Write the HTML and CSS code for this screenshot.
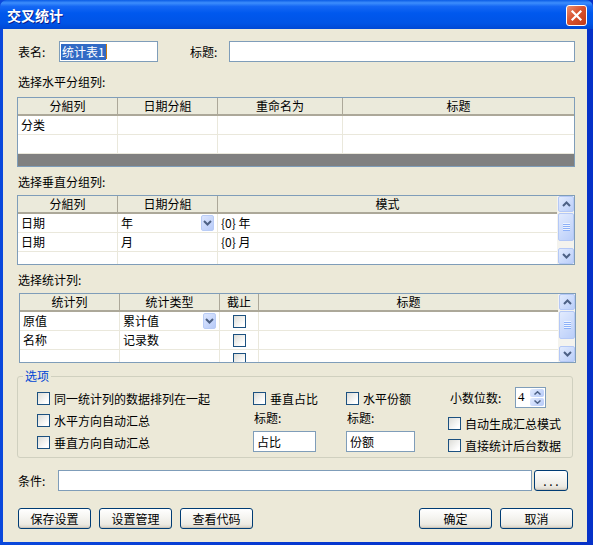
FILE: index.html
```html
<!DOCTYPE html>
<html lang="zh-CN">
<head>
    <meta charset="UTF-8">
    <title>交叉统计</title>
    <link rel="stylesheet" href="styles.css">
</head>
<body>
<div class="window">
    <div class="titlebar">
        <span class="title">交叉统计</span>
        <button class="close-btn" aria-label="关闭">
            <svg width="13" height="13" viewBox="0 0 13 13"><path d="M2.5 2.5 L10.5 10.5 M10.5 2.5 L2.5 10.5" stroke="#fff" stroke-width="2.2" stroke-linecap="square"/></svg>
        </button>
    </div>

    <div class="client">
        <div class="name-row">
            <label class="lbl lbl-name">表名:</label>
            <div class="textbox tb-name"><span class="sel">统计表1</span><span class="caret"></span></div>
            <label class="lbl lbl-title">标题:</label>
            <div class="textbox tb-title"></div>
        </div>

        <!-- horizontal group -->
        <div class="section-label">选择水平分组列:</div>
        <div class="grid">
            <div class="grid-body">
                <table>
                    <colgroup><col style="width:100px"><col style="width:100px"><col style="width:125px"><col></colgroup>
                    <tr><th>分組列</th><th>日期分組</th><th>重命名为</th><th class="last">标题</th></tr>
                    <tr><td>分类</td><td></td><td></td><td class="last"></td></tr>
                    <tr><td></td><td></td><td></td><td class="last"></td></tr>
                </table>
                <div class="grid-fill"></div>
            </div>
        </div>

        <!-- vertical group -->
        <div class="section-label section-label-2">选择垂直分组列:</div>
        <div class="grid grid-scroll">
            <div class="grid-body">
                <table>
                    <colgroup><col style="width:100px"><col style="width:100px"><col></colgroup>
                    <tr><th>分組列</th><th>日期分組</th><th class="last">模式</th></tr>
                    <tr><td>日期</td><td class="combo-cell">年<span class="combo-btn"><svg width="9" height="6" viewBox="0 0 9 6"><path d="M1 1 L4.5 4.5 L8 1" fill="none" stroke="#4D6185" stroke-width="2"/></svg></span></td><td class="last">{0} 年</td></tr>
                    <tr><td>日期</td><td>月</td><td class="last">{0} 月</td></tr>
                    <tr><td></td><td></td><td class="last"></td></tr>
                </table>
            </div>
            <div class="vscroll">
                <div class="sb-btn"><svg width="9" height="6" viewBox="0 0 9 6"><path d="M1 5 L4.5 1.5 L8 5" fill="none" stroke="#4D6185" stroke-width="2"/></svg></div>
                <div class="sb-track">
                    <div class="sb-thumb"><svg width="7" height="8" viewBox="0 0 7 8"><path d="M0 0.5 H7 M0 2.5 H7 M0 4.5 H7 M0 6.5 H7" stroke="#EEF4FE" stroke-width="1"/><path d="M0 1.5 H7 M0 3.5 H7 M0 5.5 H7 M0 7.5 H7" stroke="#8CB0F8" stroke-width="1"/></svg></div>
                </div>
                <div class="sb-btn"><svg width="9" height="6" viewBox="0 0 9 6"><path d="M1 1 L4.5 4.5 L8 1" fill="none" stroke="#4D6185" stroke-width="2"/></svg></div>
            </div>
        </div>

        <!-- totals -->
        <div class="section-label section-label-2">选择统计列:</div>
        <div class="grid grid-scroll grid-stats">
            <div class="grid-body">
                <table>
                    <colgroup><col style="width:100px"><col style="width:100px"><col style="width:39px"><col></colgroup>
                    <tr><th>统计列</th><th>统计类型</th><th>截止</th><th class="last">标题</th></tr>
                    <tr><td>原值</td><td class="combo-cell">累计值<span class="combo-btn"><svg width="9" height="6" viewBox="0 0 9 6"><path d="M1 1 L4.5 4.5 L8 1" fill="none" stroke="#4D6185" stroke-width="2"/></svg></span></td><td class="cb-cell"><span class="checkbox"></span></td><td class="last"></td></tr>
                    <tr><td>名称</td><td>记录数</td><td class="cb-cell"><span class="checkbox"></span></td><td class="last"></td></tr>
                    <tr><td></td><td></td><td class="cb-cell"><span class="checkbox"></span></td><td class="last"></td></tr>
                </table>
            </div>
            <div class="vscroll">
                <div class="sb-btn"><svg width="9" height="6" viewBox="0 0 9 6"><path d="M1 5 L4.5 1.5 L8 5" fill="none" stroke="#4D6185" stroke-width="2"/></svg></div>
                <div class="sb-track">
                    <div class="sb-thumb"><svg width="7" height="8" viewBox="0 0 7 8"><path d="M0 0.5 H7 M0 2.5 H7 M0 4.5 H7 M0 6.5 H7" stroke="#EEF4FE" stroke-width="1"/><path d="M0 1.5 H7 M0 3.5 H7 M0 5.5 H7 M0 7.5 H7" stroke="#8CB0F8" stroke-width="1"/></svg></div>
                </div>
                <div class="sb-btn"><svg width="9" height="6" viewBox="0 0 9 6"><path d="M1 1 L4.5 4.5 L8 1" fill="none" stroke="#4D6185" stroke-width="2"/></svg></div>
            </div>
        </div>

        <!-- options -->
        <fieldset class="options">
            <legend>选项</legend>
            <div class="opts">
                <div class="opt-col col-1">
                    <div class="check-row"><span class="checkbox"></span>同一统计列的数据排列在一起</div>
                    <div class="check-row"><span class="checkbox"></span>水平方向自动汇总</div>
                    <div class="check-row"><span class="checkbox"></span>垂直方向自动汇总</div>
                </div>
                <div class="opt-col col-2">
                    <div class="check-row"><span class="checkbox"></span>垂直占比</div>
                    <div class="opt-label">标题:</div>
                    <div class="textbox tb-small">占比</div>
                </div>
                <div class="opt-col col-3">
                    <div class="check-row"><span class="checkbox"></span>水平份额</div>
                    <div class="opt-label">标题:</div>
                    <div class="textbox tb-small tb-wide">份额</div>
                </div>
                <div class="opt-col col-4">
                    <div class="spin-row">
                        <span class="spin-label">小数位数:</span>
                        <div class="spin">
                            <span class="spin-value">4</span>
                            <div class="spin-btns">
                                <span class="spin-btn"><svg width="7" height="4" viewBox="0 0 7 4"><path d="M0.5 3.5 L3.5 0.8 L6.5 3.5" fill="none" stroke="#4D6185" stroke-width="1.5"/></svg></span>
                                <span class="spin-btn"><svg width="7" height="4" viewBox="0 0 7 4"><path d="M0.5 0.5 L3.5 3.2 L6.5 0.5" fill="none" stroke="#4D6185" stroke-width="1.5"/></svg></span>
                            </div>
                        </div>
                    </div>
                    <div class="check-row"><span class="checkbox"></span>自动生成汇总模式</div>
                    <div class="check-row"><span class="checkbox"></span>直接统计后台数据</div>
                </div>
            </div>
        </fieldset>

        <div class="cond-row">
            <label class="lbl lbl-cond">条件:</label>
            <div class="textbox tb-cond"></div>
            <button class="xp-btn btn-dots">. . .</button>
        </div>

        <div class="btn-row">
            <button class="xp-btn">保存设置</button>
            <button class="xp-btn">设置管理</button>
            <button class="xp-btn">查看代码</button>
            <span class="spacer"></span>
            <button class="xp-btn">确定</button>
            <button class="xp-btn">取消</button>
        </div>
    </div>
</div>
</body>
</html>
```

FILE: styles.css
```css
html, body {
    margin: 0;
    padding: 0;
}

body {
    font-family: "Noto Sans CJK SC", "Liberation Sans", sans-serif;
    font-size: 12px;
    color: #000;
    background: #ECE9D8;
}

.window {
    width: 593px;
    height: 545px;
    box-sizing: border-box;
    display: flex;
    flex-direction: column;
    background: linear-gradient(to right, #0A48DC, #0638D0 50%, #0631C8);
    overflow: hidden;
}

.titlebar {
    height: 29px;
    flex: none;
    display: flex;
    align-items: center;
    padding: 0 6px 0 7px;
    background: linear-gradient(to bottom, #0A5CE6 0%, #3D8EFC 10%, #1568F4 22%, #0058EE 45%, #0054E6 80%, #0048D4 100%);
    border-radius: 7px 7px 0 0;
}

.title {
    color: #fff;
    font-size: 14px;
    font-weight: bold;
    line-height: 16px;
    text-shadow: 1px 1px 0 #0A1E8C;
    flex: 1;
}

.close-btn {
    width: 21px;
    height: 21px;
    padding: 0;
    border: 1px solid #fff;
    border-radius: 3px;
    background: linear-gradient(135deg, #E98F70, #D9532F 45%, #C23A16);
    display: flex;
    align-items: center;
    justify-content: center;
    margin-top: 2px;
}

.client {
    flex: 1;
    margin: 0 6px 3px 3px;
    background: #ECE9D8;
    padding: 12px 12px 0 14px;
    box-sizing: border-box;
}

/* generic inputs */
.textbox {
    box-sizing: border-box;
    height: 21px;
    border: 1px solid #7F9DB9;
    background: #fff;
    line-height: 17px;
    padding: 1px 3px;
    white-space: nowrap;
}

.lbl {
    line-height: 14px;
}

.name-row {
    display: flex;
    align-items: center;
    height: 21px;
}

.lbl-name {
    width: 42px;
    padding-left: 1px;
    box-sizing: border-box;
    margin-left: 0;
}

.tb-name {
    width: 99px;
    padding-left: 1px;
    display: flex;
    align-items: center;
}

.sel {
    background: #316AC5;
    color: #fff;
    line-height: 16px;
    padding: 0 1px;
}

.caret {
    width: 1px;
    height: 15px;
    background: #C87A10;
}

.lbl-title {
    margin-left: 32px;
    width: 39px;
}

.tb-title {
    flex: 1;
}

.section-label {
    margin-top: 13px;
    padding-left: 1px;
    height: 14px;
    line-height: 14px;
}

.section-label-2 {
    margin-top: 8px;
}

/* data grids */
.grid {
    margin-top: 8px;
    border: 1px solid #7F9DB9;
    height: 70px;
    box-sizing: border-box;
    display: flex;
    background: #fff;
}

.section-label-2 + .grid {
    margin-top: 6px;
}

.grid-stats {
    margin-left: 2px;
    margin-right: -1px;
}

.grid-body {
    flex: 1;
    overflow: hidden;
    display: flex;
    flex-direction: column;
}

.grid table {
    width: 100%;
    table-layout: fixed;
    border-collapse: separate;
    border-spacing: 0;
}

.grid th,
.grid td {
    box-sizing: border-box;
    padding: 0 3px;
    white-space: nowrap;
    overflow: hidden;
    line-height: 16px;
}

.grid th {
    height: 18px;
    font-weight: normal;
    text-align: center;
    background: #EBEADB;
    border-right: 1px solid #ACA899;
    border-bottom: 2px solid #ACA899;
}

.grid td {
    height: 19px;
    border-right: 1px solid #EAE8DC;
    border-bottom: 1px solid #EAE8DC;
}

.grid th.last,
.grid td.last {
    border-right: none;
}

.grid-fill {
    flex: 1;
    background: #808080;
}

.combo-cell {
    position: relative;
}

.combo-btn {
    position: absolute;
    right: 3px;
    top: 1px;
    width: 13px;
    height: 16px;
    box-sizing: border-box;
    border: 1px solid #B9CCF6;
    border-radius: 2px;
    background: linear-gradient(135deg, #DCE6FE, #B8CBF8);
    display: flex;
    align-items: center;
    justify-content: center;
}

.cb-cell {
    text-align: center;
    padding: 0;
}

.cb-cell .checkbox {
    vertical-align: middle;
    margin-top: -2px;
}

/* scrollbar */
.vscroll {
    width: 17px;
    flex: none;
    display: flex;
    flex-direction: column;
    background: #F4F3EE;
}

.sb-btn,
.sb-thumb {
    box-sizing: border-box;
    border: 1px solid #B4C8F6;
    border-radius: 2px;
    background: linear-gradient(135deg, #E2EBFE, #BACEF9);
    display: flex;
    align-items: center;
    justify-content: center;
    margin: 0 0 0 1px;
}

.sb-btn {
    height: 16px;
}

.sb-track {
    flex: 1;
    padding-top: 1px;
}

.sb-thumb {
    height: 28px;
}

/* checkboxes */
.checkbox {
    display: inline-block;
    width: 13px;
    height: 13px;
    box-sizing: border-box;
    border: 1px solid #1C5180;
    background: linear-gradient(135deg, #DCDCD7, #FFFFFF 80%);
    flex: none;
}

.check-row {
    display: flex;
    align-items: center;
    height: 13px;
    line-height: 13px;
    gap: 4px;
    white-space: nowrap;
}

/* options group */
.options {
    margin: 6px 2px 0 0;
    padding: 0;
    border: 1px solid #D0D0BF;
    border-radius: 3px;
    min-width: 0;
}

.options legend {
    margin-left: 5px;
    padding: 0 2px;
    line-height: 14px;
    color: #0046D5;
}

.opts {
    display: flex;
    height: 74px;
}

.opt-col {
    display: flex;
    flex-direction: column;
    gap: 9px;
    padding-top: 9px;
    box-sizing: border-box;
}

.col-1 {
    width: 235px;
    padding-left: 19px;
}

.col-2 {
    width: 93px;
    gap: 6px;
}

.col-3 {
    width: 101px;
    gap: 6px;
}

.col-4 {
    flex: 1;
    padding-top: 4px;
    padding-left: 1px;
}

.opt-label {
    line-height: 14px;
    height: 14px;
    padding-left: 1px;
}

.tb-small {
    width: 63px;
}

.tb-wide {
    width: 69px;
}

.spin-row {
    display: flex;
    align-items: center;
    height: 21px;
}

.spin-label {
    width: 67px;
    padding-left: 2px;
    box-sizing: border-box;
}

.spin {
    width: 31px;
    height: 21px;
    box-sizing: border-box;
    border: 1px solid #7F9DB9;
    background: #fff;
    display: flex;
}

.spin-value {
    flex: 1;
    padding-left: 2px;
    line-height: 18px;
    font-family: "Liberation Serif", serif;
    font-size: 13px;
}

.spin-btns {
    width: 14px;
    display: flex;
    flex-direction: column;
    gap: 1px;
    padding: 1px 1px 1px 0;
}

.spin-btn {
    flex: 1;
    border-radius: 2px;
    background: linear-gradient(135deg, #E2EBFE, #B6CAF8);
    display: flex;
    align-items: center;
    justify-content: center;
}

/* bottom rows */
.cond-row {
    margin-top: 12px;
    display: flex;
    align-items: center;
    height: 21px;
}

.lbl-cond {
    width: 41px;
    padding-left: 1px;
    box-sizing: border-box;
}

.tb-cond {
    width: 474px;
}

.xp-btn {
    font-family: "Noto Sans CJK SC", "Liberation Sans", sans-serif;
    font-size: 12px;
    color: #000;
    width: 73px;
    height: 21px;
    padding: 0;
    line-height: 16px;
    border: 1px solid #003C74;
    border-radius: 3px;
    background: linear-gradient(to bottom, #FFFFFF 0%, #F5F4F0 45%, #ECEAE3 80%, #D8D2C7 100%);
    box-shadow: inset 0 -1px 0 #CDC6BA;
}

.btn-dots {
    width: 34px;
    margin-left: 2px;
    letter-spacing: 0;
}

.btn-row {
    margin-top: 17px;
    display: flex;
    gap: 8px;
    padding-left: 1px;
    padding-right: 2px;
}

.spacer {
    flex: 1;
}
```
